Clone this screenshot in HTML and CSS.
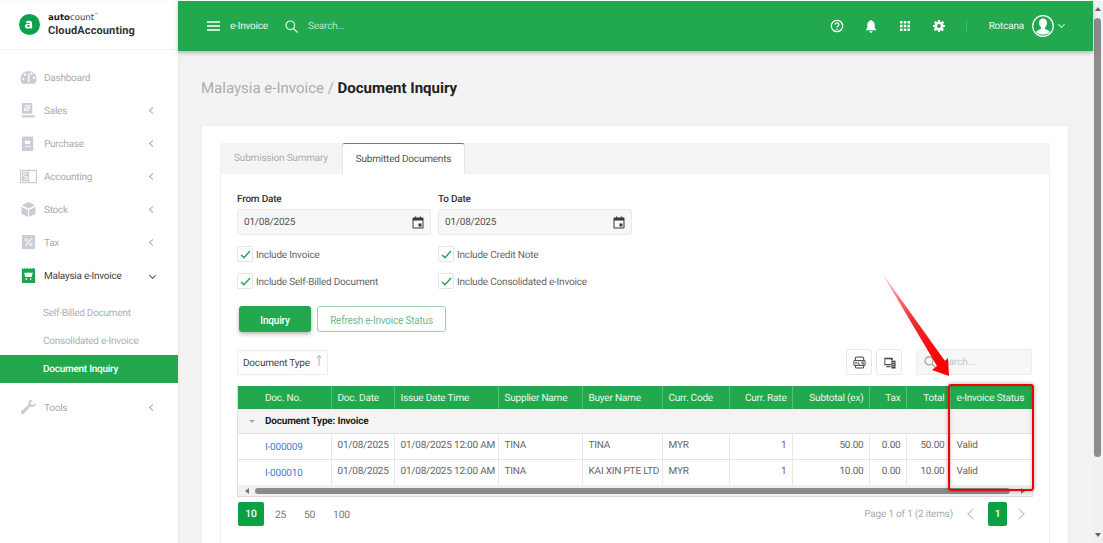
FILE: index.html
```html
<!DOCTYPE html>
<html lang="en">
<head>
<meta charset="utf-8">
<title>Document Inquiry</title>
<link rel="stylesheet" href="styles.css">
</head>
<body>
<div class="app">
  <aside class="sidebar">
    <div class="brand">
      <svg class="brand-mark" viewBox="0 0 22 22"><circle cx="11" cy="11" r="11" fill="#0da14b"/><path d="M7.200 8.200c1-1 4.600-1.700 6 0 .6.800.6 1.500.6 7h-2l-.1-.9c-1.500 1.700-5.500 1.400-5.500-1.500 0-2.400 3-2.900 5.400-2.300 0-1.500-2.500-1.600-4-.7zm1.200 4.500c0 1.300 2.700 1.100 3.300-.5-1.400-.5-3.300-.4-3.300.5z" fill="#fff"/></svg>
      <div class="brand-text">
        <div class="brand-top"><b>auto</b>count<sup>&#8482;</sup></div>
        <div class="brand-name">CloudAccounting</div>
      </div>
    </div>
    <nav class="nav">
      <a class="nav-item"><svg class="nav-icon" viewBox="0 0 18 18"><path d="M9 2a8.500 8.500 0 0 0-8.500 8.500c0 2 .7 3.800 1.700 5h13.600c1-1.200 1.700-3 1.700-5A8.500 8.500 0 0 0 9 2z" fill="#c9ced6"/><circle cx="3.500" cy="10.500" r="1.200" fill="#fff"/><circle cx="5.500" cy="6" r="1.200" fill="#fff"/><circle cx="12" cy="5" r="1.200" fill="#fff"/><circle cx="14.800" cy="9.500" r="1.200" fill="#fff"/><path d="M9 14l.6-9" stroke="#fff" stroke-width="1.400"/></svg><span>Dashboard</span></a>
      <a class="nav-item"><svg class="nav-icon" viewBox="0 0 18 18"><path d="M2 1h11v11.500H2z" fill="#c9ced6"/><path d="M2 14h13.500v2.500H3.500A1.500 1.500 0 0 1 2 15z" fill="#c9ced6"/><path d="M5 4h5v2.300H5v2.300h5" fill="none" stroke="#fff" stroke-width="1.100"/></svg><span>Sales</span><i class="chev"></i></a>
      <a class="nav-item"><svg class="nav-icon" viewBox="0 0 18 18"><path d="M2 1l1.500 1L5 1l1.300 1L8 1l1.500 1L11 1l1.500 1L14 1v16H2z" fill="#c9ced6"/><path d="M4.800 6h6.400l-1 3.500H5.800zM5.800 11.500h1.500V13H5.800zM8.800 11.500h1.500V13H8.800z" fill="#fff"/></svg><span>Purchase</span><i class="chev"></i></a>
      <a class="nav-item"><svg class="nav-icon" viewBox="0 0 18 18"><path d="M.6 2.500h16.800v13H.6z" fill="none" stroke="#c9ced6" stroke-width="1.200"/><path d="M2 4h7v10H2z" fill="#c9ced6"/><path d="M7.500 6H4v2.800h3.500v2.800H4" fill="none" stroke="#fff" stroke-width="1"/><path d="M9 2.500v13" stroke="#c9ced6" stroke-width="1.200"/></svg><span>Accounting</span><i class="chev"></i></a>
      <a class="nav-item"><svg class="nav-icon" viewBox="0 0 18 18"><path d="M9 1l7 3.500L9 8 2 4.500zM1.500 6L8.500 9.500V17l-7-3.500zM16.500 6L9.500 9.500V17l7-3.500z" fill="#c9ced6"/></svg><span>Stock</span><i class="chev"></i></a>
      <a class="nav-item"><svg class="nav-icon" viewBox="0 0 18 18"><path d="M2 1h14v15.500l-1.700-1-1.800 1-1.700-1-1.800 1-1.700-1-1.700 1-1.700-1L2 16.500z" fill="#c9ced6"/><path d="M6 12L12 5" stroke="#fff" stroke-width="1.200"/><circle cx="6.500" cy="6" r="1.300" fill="none" stroke="#fff"/><circle cx="11.500" cy="11" r="1.300" fill="none" stroke="#fff"/></svg><span>Tax</span><i class="chev"></i></a>
      <a class="nav-item open"><svg class="nav-icon" viewBox="0 0 18 18"><path d="M2 1l1.500 1L5 1l1.300 1L8 1l1.500 1L11 1l1.500 1L14 1l2 1v15H2z" fill="#1aa64c"/><path d="M4.500 6h9l-1.200 4.500H5.500zM6 12h1.500v1.500H6zM10.500 12H12v1.500h-1.500z" fill="#fff"/></svg><span>Malaysia e-Invoice</span><i class="chev down"></i></a>
      <div class="subnav">
        <a class="sub-item">Self-Billed Document</a>
        <a class="sub-item">Consolidated e-Invoice</a>
        <a class="sub-item active">Document Inquiry</a>
      </div>
      <a class="nav-item"><svg class="nav-icon" viewBox="0 0 18 18"><path d="M16.500 4.200l-3 2.300-2-1.300.3-2.600L14 1c-2.500-1-5.500.5-5.200 3.700 0 .6.200 1 .2 1.300L1.500 12.500c-1 1-.5 2.500 0 3s2 1.200 3-.2L10.800 8c3.700 1.300 6.700-1 5.700-3.800z" fill="#c9ced6"/></svg><span>Tools</span><i class="chev"></i></a>
    </nav>
  </aside>

  <div class="main">
    <header class="topbar">
      <svg class="hamburger" viewBox="0 0 13 10"><path d="M0 1h13M0 5h13M0 9h13" stroke="#fff" stroke-width="1.300"/></svg>
      <span class="module">e-Invoice</span>
      <svg class="top-search" viewBox="0 0 13 13"><circle cx="5.300" cy="5.300" r="4.300" fill="none" stroke="#e6f5ea" stroke-width="1.200"/><path d="M8.500 8.500L12.500 12.500" stroke="#e6f5ea" stroke-width="1.200"/></svg>
      <span class="top-placeholder">Search...</span>
      <div class="top-right">
        <svg class="ti" viewBox="0 0 14 14"><circle cx="7" cy="7" r="5.700" fill="none" stroke="#fff" stroke-width="1.200"/><path d="M5.200 5.600c0-2.300 3.700-2.300 3.700 0 0 1.400-1.900 1.400-1.900 2.800" fill="none" stroke="#fff" stroke-width="1.200"/><circle cx="7" cy="10.200" r=".8" fill="#fff"/></svg>
        <svg class="ti" viewBox="0 0 14 14"><path d="M7 1c.7 0 1 .4 1 1 2 .5 2.700 2 2.700 4v3l1.300 1.500v.7H2v-.7L3.300 9V6c0-2 .7-3.500 2.700-4 0-.6.300-1 1-1zM5.500 12.200h3A1.500 1.500 0 0 1 5.500 12.200z" fill="#fff"/></svg>
        <svg class="ti" viewBox="0 0 14 14"><path d="M2 2h2.500v2.500H2zM5.800 2h2.500v2.500H5.800zM9.500 2H12v2.500H9.500zM2 5.800h2.500v2.500H2zM5.800 5.800h2.500v2.500H5.800zM9.500 5.800H12v2.500H9.500zM2 9.500h2.500V12H2zM5.800 9.500h2.500V12H5.800zM9.500 9.500H12V12H9.500z" fill="#fff"/></svg>
        <svg class="ti" viewBox="0 0 14 14"><path fill-rule="evenodd" d="M6 1h2l.3 1.700 1 .4L10.800 2l1.400 1.400-1.100 1.500.4 1L13 6v2l-1.700.3-.4 1 1 1.500-1.400 1.400-1.500-1-1 .4L8 13H6l-.3-1.700-1-.4-1.500 1-1.400-1.400 1-1.500-.4-1L1 8V6l1.700-.3.4-1L2 3.400 3.400 2l1.500 1.100 1-.4zM7 5a2 2 0 1 0 0 4 2 2 0 0 0 0-4z" fill="#fff"/></svg>
        <span class="top-sep"></span>
        <span class="user">Rotcana</span>
        <svg class="avatar" viewBox="0 0 22 22"><circle cx="11" cy="11" r="10.300" fill="#22a94e" stroke="#fff" stroke-width="1.200"/><path d="M11 3.500c2.500 0 4 1.800 4 4.300 0 2-1 3.700-2 4.700v1.500c2 .8 4 1.500 5 3a10 10 0 0 1-14 0c1-1.500 3-2.200 5-3v-1.500c-1-1-2-2.700-2-4.700 0-2.500 1.500-4.300 4-4.300z" fill="#fff"/></svg>
        <i class="chev down light"></i>
      </div>
    </header>

    <div class="content">
      <h1 class="page-title"><span>Malaysia e-Invoice / </span><b>Document Inquiry</b></h1>
      <section class="card">
        <div class="tabs">
          <div class="tab">Submission Summary</div>
          <div class="tab current">Submitted Documents</div>
        </div>
        <div class="panel">
          <div class="dates">
            <label class="field"><span class="field-label">From Date</span><span class="date-input">01/08/2025<svg class="cal" viewBox="0 0 12 12"><path fill-rule="evenodd" d="M1.500 1H3V0h1.200v1h3.600V0H9v1h1.500c.6 0 1 .4 1 1v9c0 .6-.4 1-1 1h-9c-.6 0-1-.4-1-1V2c0-.6.4-1 1-1zm0 3v7h9V4zm5 3h3v3h-3z" fill="#333b40"/></svg></span></label>
            <label class="field"><span class="field-label">To Date</span><span class="date-input">01/08/2025<svg class="cal" viewBox="0 0 12 12"><path fill-rule="evenodd" d="M1.500 1H3V0h1.200v1h3.600V0H9v1h1.500c.6 0 1 .4 1 1v9c0 .6-.4 1-1 1h-9c-.6 0-1-.4-1-1V2c0-.6.4-1 1-1zm0 3v7h9V4zm5 3h3v3h-3z" fill="#333b40"/></svg></span></label>
          </div>
          <div class="checks">
            <div class="check"><span class="box"><svg viewBox="0 0 12 10"><path d="M1 5.500L4.300 8.500 11 1.200" fill="none" stroke="#22a94e" stroke-width="1.600"/></svg></span><span class="check-text">Include Invoice</span></div>
            <div class="check"><span class="box"><svg viewBox="0 0 12 10"><path d="M1 5.500L4.300 8.500 11 1.200" fill="none" stroke="#22a94e" stroke-width="1.600"/></svg></span><span class="check-text">Include Credit Note</span></div>
            <div class="check"><span class="box"><svg viewBox="0 0 12 10"><path d="M1 5.500L4.300 8.500 11 1.200" fill="none" stroke="#22a94e" stroke-width="1.600"/></svg></span><span class="check-text">Include Self-Billed Document</span></div>
            <div class="check"><span class="box"><svg viewBox="0 0 12 10"><path d="M1 5.500L4.300 8.500 11 1.200" fill="none" stroke="#22a94e" stroke-width="1.600"/></svg></span><span class="check-text">Include Consolidated e-Invoice</span></div>
          </div>
          <div class="actions">
            <button class="btn primary">Inquiry</button>
            <button class="btn outline">Refresh e-Invoice Status</button>
          </div>
          <div class="toolbar">
            <div class="chip">Document Type<svg viewBox="0 0 6 11"><path d="M3 11V1M1 3l2-2.500L5 3" fill="none" stroke="#aaa" stroke-width="1"/></svg></div>
            <button class="tool"><svg viewBox="0 0 14 14"><path d="M4 1h6c1 0 1.500.7 1.500 1.500V5h-9V2.500C2.500 1.700 3 1 4 1zM2.500 10h9v1.500c0 .8-.5 1.500-1.500 1.500H4c-1 0-1.500-.7-1.500-1.500z" fill="none" stroke="#444" stroke-width="1.100"/><path d="M1 5h12v5H1z" fill="#fff" stroke="#444" stroke-width="1"/><path d="M2.500 6.500l2 2M4.500 6.500l-2 2M6 6.300v2.400h1.500M11.500 6.500H9.500v1h2v1.200H9.500" fill="none" stroke="#444" stroke-width=".8"/></svg></button>
            <button class="tool"><svg viewBox="0 0 14 14"><path d="M1.500 2h9v2.500H8.500v-1h-6v5h6V10h-7z" fill="#444"/><path d="M3.500 11.500h4.500" stroke="#444" stroke-width="1.200"/><path d="M9 5h4.500v8.500H9z" fill="#444"/><path d="M10 7h2.500M10 9h2.500M10 11h2.500" stroke="#fff" stroke-width=".7"/></svg></button>
            <div class="grid-search"><svg viewBox="0 0 13 13"><circle cx="5.300" cy="5.300" r="4.300" fill="none" stroke="#9a9a9a" stroke-width="1.200"/><path d="M8.500 8.500L12.500 12.500" stroke="#9a9a9a" stroke-width="1.200"/></svg>Search...</div>
          </div>
          <div class="grid">
            <table>
              <colgroup>
                <col class="c-ind"><col class="c-no"><col class="c-date"><col class="c-issue"><col class="c-sup"><col class="c-buy"><col class="c-cur"><col class="c-rate"><col class="c-sub"><col class="c-tax"><col class="c-tot"><col class="c-st">
              </colgroup>
              <thead>
                <tr><th class="blank"></th><th class="nopad">Doc. No.</th><th>Doc. Date</th><th>Issue Date Time</th><th>Supplier Name</th><th>Buyer Name</th><th>Curr. Code</th><th class="num">Curr. Rate</th><th class="num">Subtotal (ex)</th><th class="num">Tax</th><th class="num">Total</th><th>e-Invoice Status</th></tr>
              </thead>
              <tbody>
                <tr class="group"><td class="caret"><i></i></td><td colspan="11" class="nopad">Document Type: Invoice</td></tr>
                <tr><td class="blank"></td><td class="nopad"><a class="doc-link">I-000009</a></td><td>01/08/2025</td><td>01/08/2025 12:00 AM</td><td>TINA</td><td>TINA</td><td>MYR</td><td class="num">1</td><td class="num">50.00</td><td class="num">0.00</td><td class="num">50.00</td><td>Valid</td></tr>
                <tr><td class="blank"></td><td class="nopad"><a class="doc-link">I-000010</a></td><td>01/08/2025</td><td>01/08/2025 12:00 AM</td><td>TINA</td><td>KAI XIN PTE LTD</td><td>MYR</td><td class="num">1</td><td class="num">10.00</td><td class="num">0.00</td><td class="num">10.00</td><td>Valid</td></tr>
              </tbody>
            </table>
            <div class="hscroll"><i class="arrow-l"></i><span class="thumb"></span><i class="arrow-r"></i></div>
          </div>
          <div class="pager">
            <span class="page on">10</span><span class="page">25</span><span class="page">50</span><span class="page">100</span>
            <span class="page-info">Page 1 of 1 (2 items)</span>
            <i class="pg-chev"></i>
            <span class="page on small">1</span>
            <i class="pg-chev next"></i>
          </div>
        </div>
      </section>
    </div>
  </div>

  <div class="vscroll"><i class="up"></i><span class="vthumb"></span><i class="dn"></i></div>

  <svg class="callout-arrow" viewBox="0 0 72 112">
    <defs><linearGradient id="ag" x1="0" y1="0" x2=".6" y2="1"><stop offset="0" stop-color="#ff0000" stop-opacity=".05"/><stop offset=".55" stop-color="#ee3030"/><stop offset="1" stop-color="#ff0000"/></linearGradient></defs>
    <path d="M0 2L65 93 68 90 69 108 52 102 57 98z" fill="url(#ag)"/>
  </svg>
  <div class="callout-box"></div>
</div>
</body>
</html>
```

FILE: styles.css
```css
* { box-sizing: border-box; }
html, body { margin: 0; height: 100%; overflow: hidden; }
body { font-family: Roboto, "Liberation Sans", sans-serif; font-size: 10px; letter-spacing: -.2px; color: #555; text-rendering: geometricPrecision; }
.app { position: relative; display: flex; height: 543px; border-top: 1px solid #fafafa; background: #f3f3f3; overflow: hidden; }

/* Sidebar */
.sidebar { flex: 0 0 178px; background: #fff; box-shadow: 1px 0 3px rgba(0,0,0,.06); }
.brand { display: flex; align-items: center; height: 49px; padding: 0 0 1px 19px; gap: 8px; border-bottom: 1px solid #f1f1f1; }
.brand-mark { width: 21px; height: 21px; }
.brand-text { line-height: 1; }
.brand-top { font-family: "DejaVu Sans", sans-serif; font-size: 8.6px; letter-spacing: 0; color: #444; height: 12px; }
.brand-top b { font-weight: 700; color: #222; }
.brand-top sup { font-size: 4px; }
.brand-name { font-family: Roboto, sans-serif; font-weight: 700; font-size: 11px; letter-spacing: .12px; color: #333; }
.nav { padding-top: 11px; }
.nav-item { display: flex; align-items: center; height: 33px; padding-left: 20px; color: #a8acb2; font-size: 10px; letter-spacing: -.25px; position: relative; }
.nav-item span { padding-top: 2px; }
.nav-icon { width: 17px; height: 17px; margin-right: 7px; }
.nav-item.open { color: #444; }
.chev { position: absolute; right: 23px; top: 50%; width: 5px; height: 5px; margin-top: -2.500px; border-left: 1px solid #aaa; border-bottom: 1px solid #aaa; transform: rotate(45deg); }
.chev.down { transform: rotate(-45deg); border-color: #555; margin-top: -3px; right: 23px; }
.subnav { padding-top: 6px; padding-bottom: 8px; }
.sub-item { display: flex; align-items: center; height: 28.300px; padding: 2px 0 0 43px; color: #adb0b5; font-size: 10px; letter-spacing: -.25px; }
.sub-item.active { background: #22a94e; color: #fff; font-weight: 500; }

/* Main */
.main { flex: 1; min-width: 0; display: flex; flex-direction: column; }
.topbar { flex: 0 0 50px; display: flex; align-items: center; background: #22a94e; padding-left: 29px; box-shadow: 0 2px 4px rgba(0,0,0,.25); color: #eaf7ee; position: relative; z-index: 1; }
.hamburger { width: 13px; height: 10px; }
.module { margin-left: 10px; }
.top-search { width: 13px; height: 13px; margin-left: 17px; }
.top-placeholder { margin-left: 10px; padding-top: 1px; color: #b8e3c6; }
.top-right { margin-left: auto; display: flex; align-items: center; padding-right: 39px; position: relative; }
.ti { width: 14px; height: 14px; margin-right: 20px; }
.top-sep { width: 1px; height: 10px; background: #4cbb71; margin-right: 22px; }
.user { margin-right: 8px; }
.avatar { width: 22px; height: 22px; }
.chev.light { border-color: #cfeeda; right: 29px; margin-top: -4px; }

.content { padding: 29px 25px 0 23px; flex: 1; min-height: 0; }
.page-title { margin: 0; font-size: 15px; letter-spacing: 0; line-height: 16px; font-weight: 400; color: #adadad; }
.page-title b { font-weight: 700; color: #222; }
.card { margin-top: 30px; margin-left: 1px; background: #fff; padding: 17px 18px 0; height: 600px; box-shadow: 0 0 4px rgba(0,0,0,.05); }
.tabs { display: flex; height: 31px; background: #f4f4f4; }
.tab { width: 122px; display: flex; align-items: center; justify-content: center; color: #aeaeae; }
.tab.current { width: 123px; height: 31px; background: #fff; border-top: 1.500px solid #22a94e; border-radius: 3px 3px 0 0; border-left: 1px solid #e6e6e6; border-right: 1px solid #e6e6e6; color: #555; }
.panel { border-left: 1px solid #eee; border-right: 1px solid #eee; padding: 20px 17px 0 16px; height: 600px; }

.dates { display: flex; gap: 7px; }
.field { width: 194px; display: block; }
.field-label { display: block; font-weight: 500; color: #333; line-height: 12px; margin-bottom: 3px; }
.date-input { display: flex; align-items: center; justify-content: space-between; height: 26px; background: #f7f7f7; border: 1px solid #e9e9e9; border-radius: 3px; padding: 0 6px; color: #555; }
.cal { width: 12px; height: 13px; }
.checks { display: grid; grid-template-columns: 201px 1fr; row-gap: 11px; margin-top: 11px; }
.check { display: flex; align-items: center; gap: 3px; height: 16px; color: #666; }
.check-text { padding-top: 3px; }
.box { width: 16px; height: 16px; display: flex; align-items: center; justify-content: center; border: 1px solid #e5e5e5; border-radius: 2px; background: #fff; }
.box svg { width: 11px; height: 9px; }
.actions { display: flex; gap: 6px; margin-top: 17px; padding-left: 2px; }
.btn { height: 26px; padding-top: 3px; font-family: inherit; font-size: 10px; letter-spacing: -.2px; border-radius: 3px; cursor: pointer; }
.btn.primary { width: 72px; background: #22a94e; color: #fff; border: 0; font-weight: 500; box-shadow: 0 2px 4px rgba(0,0,0,.3); }
.btn.outline { width: 129px; background: #fff; color: #6fbc8a; border: 1px solid #9ccdae; }

.toolbar { display: flex; align-items: center; margin-top: 17px; }
.chip { display: flex; align-items: center; gap: 6px; width: 91px; height: 25px; padding: 3px 0 0 5px; border: 1px solid #ececec; color: #444; white-space: nowrap; }
.chip svg { width: 6px; height: 11px; margin-top: -6px; flex: none; }
.tool { width: 26px; height: 26px; margin-left: 4px; padding: 0; display: flex; align-items: center; justify-content: center; background: #fff; border: 1px solid #e8e8e8; border-radius: 3px; }
.chip + .tool { margin-left: auto; }
.tool svg { width: 13px; height: 13px; }
.grid-search { width: 116px; height: 26px; margin-left: 14px; display: flex; align-items: center; gap: 2px; padding-left: 7px; background: #f7f7f7; border: 1px solid #ececec; border-radius: 3px; color: #c4c4c4; }
.grid-search svg { width: 12px; height: 12px; }

.grid { margin-top: 11px; border-right: 1px solid #ddd; border-bottom: 1px solid #ddd; border-left: 1px solid #ddd; width: 796px; }
table { table-layout: fixed; border-collapse: collapse; width: 795px; font-size: 10px; }
.c-ind { width: 26px; } .c-no { width: 67px; } .c-date { width: 63px; } .c-issue { width: 104px; }
.c-sup { width: 84px; } .c-buy { width: 80px; } .c-cur { width: 67px; } .c-rate { width: 63px; }
.c-sub { width: 77px; } .c-tax { width: 37px; } .c-tot { width: 44px; } .c-st { width: 83px; }
th { height: 23px; background: #22a94e; color: #eaf7ee; font-weight: 400; text-align: left; padding: 1px 6px 0; border-left: 1px solid #58bf7a; white-space: nowrap; }
th.blank, th.nopad, td.blank, td.nopad { border-left: 0; }
th.nopad, td.nopad { padding-left: 1px; }
td { height: 26px; padding: 0 6px 1px; border-left: 1px solid #e8e8e8; border-bottom: 1px solid #e3e3e3; color: #666; white-space: nowrap; overflow: hidden; }
tbody tr:last-child td { border-bottom: 0; }
.num { text-align: right; padding-right: 5px; }
.group td { height: 24px; background: #f4f4f4; color: #222; font-weight: 700; border-left: 0; padding-top: 1px; padding-bottom: 0; }
.caret i { display: block; margin-left: 5px; width: 0; height: 0; border-left: 3px solid transparent; border-right: 3px solid transparent; border-top: 3px solid #aaa; }
.doc-link { color: #3f7fd0; position: relative; top: 2px; display: inline-block; }
.hscroll { position: relative; height: 11px; background: #f1f1f1; display: flex; align-items: center; }
.thumb { position: absolute; left: 17px; width: 755px; height: 6px; border-radius: 3px; background: #8b8b8b; }
.arrow-l { position: absolute; left: 7px; width: 0; height: 0; border-top: 3px solid transparent; border-bottom: 3px solid transparent; border-right: 4px solid #777; }
.arrow-r { position: absolute; right: 7px; width: 0; height: 0; border-top: 3px solid transparent; border-bottom: 3px solid transparent; border-left: 4px solid #777; }

.pager { display: flex; align-items: center; margin-top: 5px; padding-left: 1px; color: #777; font-size: 10.300px; }
.page { width: 29px; text-align: center; }
.page.on + .page { margin-left: 2px; }
.page:nth-child(4) { width: 35px; }
.page.on { width: 26px; height: 24px; line-height: 24px; background: #0ba044; color: #fff; font-weight: 500; border-radius: 2px; }
.page.on.small { width: 19px; }
.page-info { margin-left: auto; color: #aaa; margin-right: 16px; font-size: 10px; }
.pg-chev { width: 8px; height: 8px; border-left: 1.200px solid #bbb; border-bottom: 1.200px solid #bbb; transform: rotate(45deg); margin-right: 11px; }
.pg-chev.next { transform: rotate(225deg); margin: 0 9px 0 8px; }

/* Page scrollbar */
.vscroll { flex: 0 0 10px; position: relative; background: #f1f1f1; }
.vthumb { position: absolute; top: 17px; left: 1px; width: 7px; height: 439px; border-radius: 4px; background: #8c8c8c; }
.up, .dn { position: absolute; left: 2px; width: 0; height: 0; border-left: 3px solid transparent; border-right: 3px solid transparent; }
.up { top: 6px; border-bottom: 4px solid #666; }
.dn { bottom: 6px; border-top: 4px solid #666; }

/* Annotation overlay */
.callout-arrow { position: absolute; left: 880px; top: 267px; width: 72px; height: 112px; z-index: 3; }
.callout-box { position: absolute; left: 948px; top: 383px; width: 86px; height: 107px; border: 2px solid #f40000; border-radius: 3px; box-shadow: 0 0 4px rgba(0,0,0,.35), inset 0 0 4px rgba(0,0,0,.2); z-index: 3; }
```
